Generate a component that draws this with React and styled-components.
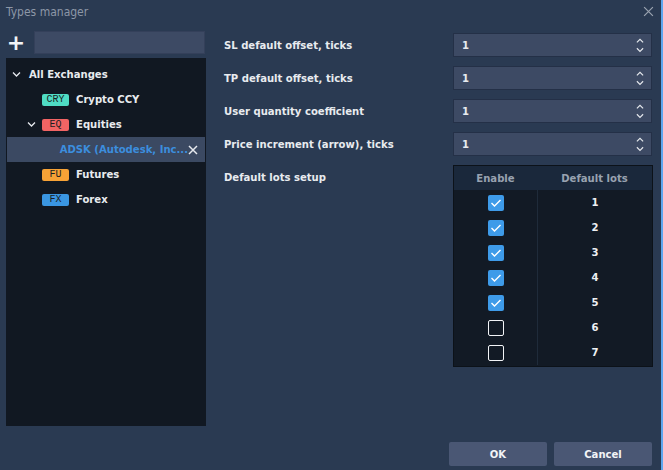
import styled, { createGlobalStyle } from 'styled-components';

const GlobalStyle = createGlobalStyle`
  html, body {
    margin: 0;
    padding: 0;
    background: #2a3a52;
  }
  body {
    font-family: 'DejaVu Sans Condensed', 'DejaVu Sans', sans-serif;
  }
`;

const exchanges = [
  { id: 'cry', badge: 'CRY', color: '#4fdcc4', name: 'Crypto CCY' },
  {
    id: 'eq',
    badge: 'EQ',
    color: '#f26464',
    name: 'Equities',
    open: true,
    children: [{ id: 'adsk', name: 'ADSK (Autodesk, Inc...' }],
  },
  { id: 'fu', badge: 'FU', color: '#f7a236', name: 'Futures' },
  { id: 'fx', badge: 'FX', color: '#3a96e2', name: 'Forex' },
];

const fields = [
  'SL default offset, ticks',
  'TP default offset, ticks',
  'User quantity coefficient',
  'Price increment (arrow), ticks',
];

const lots = [
  { lot: 1, on: true },
  { lot: 2, on: true },
  { lot: 3, on: true },
  { lot: 4, on: true },
  { lot: 5, on: true },
  { lot: 6, on: false },
  { lot: 7, on: false },
];

function Chevron({ dir = 'down', size = 9 }) {
  const d = dir === 'down' ? 'M1 2.5 L4.5 6 L8 2.5' : 'M1 6 L4.5 2.5 L8 6';
  return (
    <svg width={size} height={size * 0.9} viewBox="0 0 9 8">
      <path d={d} fill="none" stroke="#e6e9ee" strokeWidth="1.3" />
    </svg>
  );
}

function Cross({ size = 10, color = '#e6e9ee', width = 1.5 }) {
  return (
    <svg width={size} height={size} viewBox="0 0 10 10">
      <path d="M1 1 L9 9 M9 1 L1 9" stroke={color} strokeWidth={width} />
    </svg>
  );
}

export default function App() {
  return (
    <>
      <GlobalStyle />
      <Window>
        <TitleBar>
          <Title>Types manager</Title>
          <CloseBtn>
            <Cross size={11} color="#9aa3b0" width={1.1} />
          </CloseBtn>
        </TitleBar>
        <Body>
          <LeftCol>
            <Toolbar>
              <Plus>+</Plus>
              <Search />
            </Toolbar>
            <TreePanel>
              <TreeRow $level={0}>
                <Toggle>
                  <Chevron />
                </Toggle>
                <RootLabel>All Exchanges</RootLabel>
              </TreeRow>
              {exchanges.map((ex) => (
                <div key={ex.id}>
                  <TreeRow $level={1}>
                    <Toggle>{ex.open && <Chevron />}</Toggle>
                    <Badge $color={ex.color}>{ex.badge}</Badge>
                    <NodeLabel>{ex.name}</NodeLabel>
                  </TreeRow>
                  {ex.open &&
                    ex.children.map((c) => (
                      <TreeRow key={c.id} $level={2} $selected>
                        <Toggle />
                        <Symbol>{c.name}</Symbol>
                        <RemoveBtn>
                          <Cross size={10} />
                        </RemoveBtn>
                      </TreeRow>
                    ))}
                </div>
              ))}
            </TreePanel>
          </LeftCol>
          <Form>
            {fields.map((f) => (
              <FieldRow key={f}>
                <Label>{f}</Label>
                <Spinner>
                  <SpinValue>1</SpinValue>
                  <SpinArrows>
                    <Chevron dir="up" size={8} />
                    <Chevron dir="down" size={8} />
                  </SpinArrows>
                </Spinner>
              </FieldRow>
            ))}
            <FieldRow $top>
              <Label $pad>Default lots setup</Label>
              <LotsTable>
                <HeadRow>
                  <HeadCell>Enable</HeadCell>
                  <HeadCell>Default lots</HeadCell>
                </HeadRow>
                {lots.map((l) => (
                  <LotRow key={l.lot}>
                    <LotCell>
                      <Check $on={l.on}>
                        {l.on && (
                          <svg width="12" height="10" viewBox="0 0 12 10">
                            <path
                              d="M1.5 5 L4.5 8 L10.5 2"
                              fill="none"
                              stroke="#fff"
                              strokeWidth="1.4"
                            />
                          </svg>
                        )}
                      </Check>
                    </LotCell>
                    <LotCell $num>{l.lot}</LotCell>
                  </LotRow>
                ))}
              </LotsTable>
            </FieldRow>
          </Form>
        </Body>
        <Footer>
          <Button>OK</Button>
          <Button>Cancel</Button>
        </Footer>
      </Window>
    </>
  );
}

const Window = styled.div`
  width: 663px;
  height: 470px;
  box-sizing: border-box;
  border-right: 2px solid #5ea6ee;
  background: #2a3a52;
  display: flex;
  flex-direction: column;
  overflow: hidden;
`;

const TitleBar = styled.div`
  height: 23px;
  display: flex;
  align-items: center;
  justify-content: space-between;
  padding: 0 7px 1px 6px;
`;

const Title = styled.span`
  color: #8d97a7;
  font-size: 12px;
`;

const CloseBtn = styled.span`
  display: flex;
`;

const Body = styled.div`
  flex: 1;
  display: flex;
  min-height: 0;
`;

const LeftCol = styled.div`
  width: 200px;
  margin-left: 6px;
  display: flex;
  flex-direction: column;
`;

const Toolbar = styled.div`
  display: flex;
  align-items: center;
  gap: 8px;
  padding: 7px 1px 4px 0;
`;

const Plus = styled.span`
  width: 20px;
  text-align: center;
  color: #f2f4f7;
  font-size: 22px;
  line-height: 22px;
  font-weight: bold;
  font-family: 'DejaVu Sans', sans-serif;
`;

const Search = styled.div`
  flex: 1;
  height: 23px;
  box-sizing: border-box;
  background: #3d4a64;
  border: 1px solid #34405a;
`;

const TreePanel = styled.div`
  flex: 1;
  background: #111822;
  padding-top: 4px;
`;

const TreeRow = styled.div`
  height: 25px;
  margin: 0 1px;
  display: flex;
  align-items: center;
  padding-left: ${(p) => 5 + p.$level * 15 + (p.$level > 1 ? 4 : 0)}px;
  background: ${(p) => (p.$selected ? '#3b4962' : 'transparent')};
`;

const Toggle = styled.span`
  width: 17px;
  display: flex;
  align-items: center;
`;

const RootLabel = styled.span`
  color: #e8ebef;
  font-size: 11.2px;
  font-weight: bold;
`;

const Badge = styled.span`
  width: 27px;
  height: 12px;
  margin-left: -2px;
  margin-right: 7px;
  border-radius: 2px;
  background: ${(p) => p.$color};
  color: #1a1d22;
  font-family: 'Liberation Mono', monospace;
  font-size: 10px;
  line-height: 12px;
  text-align: center;
`;

const NodeLabel = styled.span`
  color: #e8ebef;
  font-size: 11.2px;
  font-weight: bold;
`;

const Symbol = styled.span`
  flex: 1;
  color: #3c8ede;
  font-size: 11.2px;
  font-weight: bold;
  white-space: nowrap;
`;

const RemoveBtn = styled.span`
  display: flex;
  margin-right: 7px;
`;

const Form = styled.div`
  flex: 1;
  padding: 9px 9px 0 18px;
  display: flex;
  flex-direction: column;
  gap: 9px;
`;

const FieldRow = styled.div`
  display: flex;
  align-items: ${(p) => (p.$top ? 'flex-start' : 'center')};
`;

const Label = styled.span`
  width: 229px;
  color: #e8ebef;
  font-size: 11.2px;
  font-weight: bold;
  padding-top: ${(p) => (p.$pad ? '6px' : '0')};
`;

const Spinner = styled.div`
  width: 199px;
  height: 24px;
  box-sizing: border-box;
  background: #3d4a64;
  border: 1px solid #243047;
  display: flex;
  align-items: center;
  justify-content: space-between;
  padding: 0 7px 0 8px;
`;

const SpinValue = styled.span`
  color: #e8ebef;
  font-size: 11.2px;
  font-weight: bold;
`;

const SpinArrows = styled.span`
  display: flex;
  flex-direction: column;
  gap: 2px;
`;

const LotsTable = styled.div`
  width: 200px;
  box-sizing: border-box;
  border: 1px solid #0c1219;
  background: #121a25;
  padding-bottom: 1px;
`;

const HeadRow = styled.div`
  display: grid;
  grid-template-columns: 83px 1fr;
  height: 24px;
  background: #1a283b;
`;

const HeadCell = styled.span`
  display: flex;
  align-items: center;
  justify-content: center;
  color: #98a2b0;
  font-size: 11.2px;
  font-weight: bold;
`;

const LotRow = styled.div`
  display: grid;
  grid-template-columns: 83px 1fr;
  height: 25px;
`;

const LotCell = styled.span`
  display: flex;
  align-items: center;
  justify-content: center;
  border-left: ${(p) => (p.$num ? '1px solid #1f2b3a' : 'none')};
  color: #eef0f3;
  font-size: 11.2px;
  font-weight: bold;
`;

const Check = styled.span`
  width: 16px;
  height: 16px;
  box-sizing: border-box;
  border-radius: 2px;
  display: flex;
  align-items: center;
  justify-content: center;
  background: ${(p) => (p.$on ? '#3e9be9' : 'transparent')};
  border: ${(p) => (p.$on ? 'none' : '1.5px solid #f2f4f7')};
`;

const Footer = styled.div`
  height: 44px;
  box-sizing: border-box;
  display: flex;
  justify-content: flex-end;
  gap: 7px;
  padding: 16px 9px 4px 0;
`;

const Button = styled.button`
  width: 98px;
  height: 24px;
  border: none;
  border-radius: 2px;
  background: #4a5774;
  color: #f2f4f7;
  font-family: 'DejaVu Sans Condensed', 'DejaVu Sans', sans-serif;
  font-size: 11.2px;
  font-weight: bold;
`;
